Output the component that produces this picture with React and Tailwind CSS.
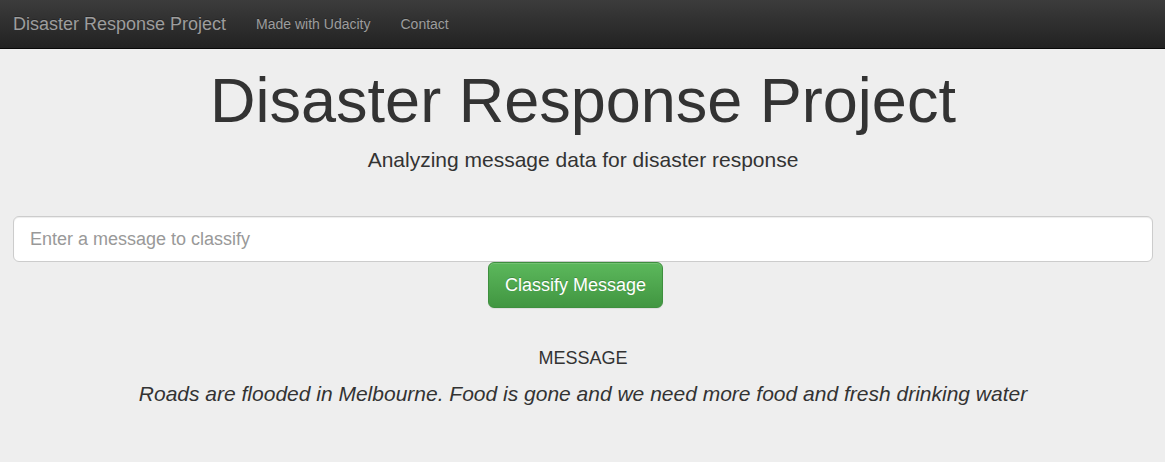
export default function App() {
  return (
    <div className="min-h-screen bg-[#eee] font-['Liberation_Sans',Arial,sans-serif] text-[#333]">
      <nav className="box-content flex h-12 items-center border-b border-[#080808] bg-linear-to-b from-[#3c3c3c] to-[#222] text-[#9d9d9d] [text-shadow:0_-1px_0_rgb(0_0_0/0.25)]">
        <a href="#" className="pr-[15px] pl-[13px] text-lg leading-5">Disaster Response Project</a>
        <a href="#udacity" className="px-[15px] text-sm leading-5">Made with Udacity</a>
        <a href="#contact" className="px-[15px] text-sm leading-5">Contact</a>
      </nav>
      <main className="pt-4 pr-3 pl-[13px] text-center">
        <h1 className="text-[63px] leading-[70px]">Disaster Response Project</h1>
        <p className="mt-[10px] text-[21px] leading-[30px]">Analyzing message data for disaster response</p>
        <form className="mt-[41px]" onSubmit={(e) => e.preventDefault()}>
          <input
            type="text"
            aria-label="Message to classify"
            placeholder="Enter a message to classify"
            className="block h-[46px] w-full rounded-md border border-[#ccc] bg-white px-4 text-lg placeholder-[#999] shadow-[inset_0_1px_1px_rgb(0_0_0/0.075)]"
          />
          <div className="pr-[15px]">
            <button
              type="submit"
              className="h-[46px] rounded-md border border-[#3e8f3e] bg-linear-to-b from-[#5cb85c] to-[#419641] px-4 text-lg text-white shadow-[inset_0_1px_0_rgb(255_255_255/0.15),0_1px_1px_rgb(0_0_0/0.075)] [text-shadow:0_-1px_0_rgb(0_0_0/0.2)]"
            >
              Classify Message
            </button>
          </div>
        </form>
        <h2 className="mt-10 text-lg leading-5">MESSAGE</h2>
        <p className="mt-[11px] text-[21px] leading-[30px] italic">
          Roads are flooded in Melbourne. Food is gone and we need more food and fresh drinking water
        </p>
      </main>
    </div>
  );
}
